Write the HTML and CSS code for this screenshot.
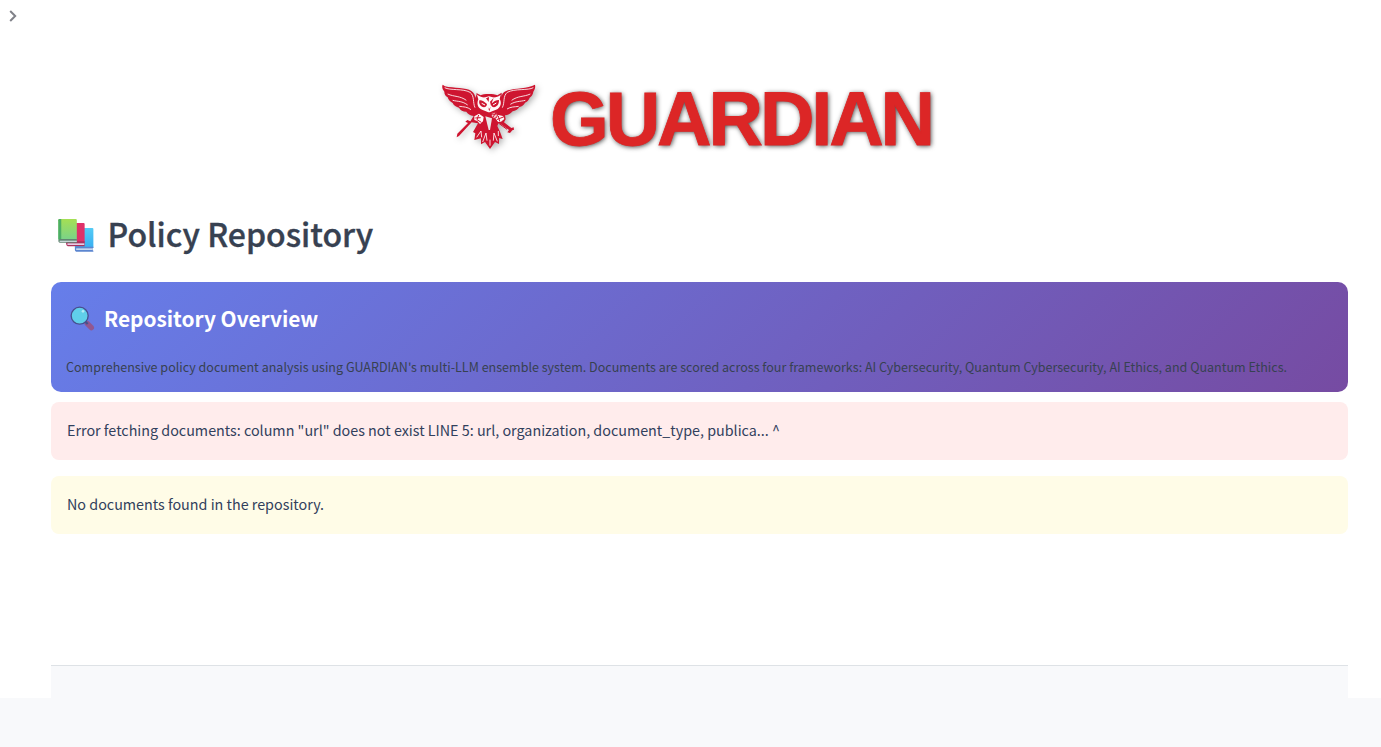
FILE: index.html
```html
<!DOCTYPE html>
<html lang="en">
<head>
<meta charset="utf-8">
<title>Policy Repository</title>
<link rel="stylesheet" href="styles.css">
</head>
<body>
<div class="app">
  <button class="expand" aria-label="Open sidebar">
    <svg width="8" height="12" viewBox="0 0 8 12"><path d="M1.2 1 6.2 6 1.2 11" fill="none" stroke="#808289" stroke-width="2"/></svg>
  </button>
  <main class="content">
    <header class="brand">
      <svg class="owl" width="110" height="85" viewBox="0 0 330 255">
        <path class="red" d="M23 29 L30 34 C56 40 94 38 109 48 C117 53 121 62 121 69 L125 57 L124 54 L137 61 C145 56 177 56 187 61 L200 53 L200 66 C201 54 209 49 219 46 C240 39 278 41 300 29 C302 38 299 45 295 50 C294 59 289 64 284 68 C281 76 276 80 270 83 C267 90 261 94 253 96 C248 104 241 107 233 109 C226 117 218 121 210 121 L212 133 L207 142 L229 159 L236 157 L237 164 L232 166 L225 174 L217 172 L222 165 L191 143 L187 153 L195 170 L203 192 L192 189 L192 207 L180 201 L165 222 L150 201 L138 208 L138 190 L118 195 L121 175 L114 171 L129 145 L110 142 L72 183 L65 187 L67 176 L99 144 L91 140 L97 135 L106 139 L116 123 C105 121 98 116 94 110 C84 110 76 106 72 98 C64 97 56 91 53 84 C45 80 40 74 38 67 C31 63 28 57 28 50 C22 43 20 36 23 29Z"/>
        <g class="line">
          <path d="M29 38 C45 47 84 40 105 52 C119 62 113 83 120 98"/>
          <path d="M295 38 C280 47 239 40 217 52 C203 63 210 83 202 98"/>
          <path d="M38 57 C58 66 75 62 94 76 M53 76 C69 80 82 78 98 90 M73 94 C87 96 96 95 108 104"/>
          <path d="M286 57 C266 66 249 62 230 76 M271 76 C255 80 242 78 226 88 M251 94 C237 96 228 95 216 102"/>
          <path d="M125 187 L138 168 L140 187 M143 201 L153 174 L156 197 M165 212 L165 194 M175 197 L177 174 L187 199 M190 183 L190 168"/>
        </g>
        <path class="white" d="M126 59 C137 66 143 68 151 67 L162 64 L173 67 C181 68 190 65 197 59 L194 72 C201 83 197 95 188 102 C179 106 171 108 165 112 L160 112 C153 108 145 106 137 102 C126 95 126 83 130 73Z"/>
        <path class="red" d="M133 76 C141 75 147 79 156 87 C155 97 147 98 141 95 C134 92 131 84 133 76Z M192 75 C183 75 175 80 168 87 C169 97 177 99 184 94 C190 90 192 83 192 75Z M153 70 L161 81 L162 66Z M176 69 L165 80 L168 92 L172 79Z M158 95 L162 103 L167 95L163 109Z"/>
        <path class="mark" d="M140 85 L150 90 M184 84 L174 90"/>
        <path class="white" d="M118 124 L132 116 L146 126 L144 139 L135 147 L127 138 L118 135Z M180 128 L190 120 L204 123 L208 132 L198 140 L188 141Z"/>
        <g class="detail"><path d="M121 129 L137 128 M131 120 L126 134 L139 142 M185 134 L205 126 M190 123 L194 139"/></g>
        <path class="gap" d="M151 124 L171 130 L165 165 L161 165Z"/>
        <circle class="rose" cx="178" cy="121" r="9"/>
        <path class="detail" d="M172 118 L184 117 M174 126 L183 113 M181 133 L190 144 L216 163"/>
      </svg>
      <span class="wordmark">GUARDIAN</span>
    </header>
    <h1 class="title">
      <svg class="books" width="37" height="36" viewBox="0 0 114 108" preserveAspectRatio="none">
        <defs>
          <linearGradient id="g" x2="0" y2="1"><stop stop-color="#a5df54"/><stop offset="1" stop-color="#79d38a"/></linearGradient>
          <linearGradient id="b" x2="0" y2="1"><stop stop-color="#55cbf5"/><stop offset="1" stop-color="#38aef1"/></linearGradient>
        </defs>
        <path fill="url(#b)" d="M55 30h51q3 0 3 3v57H52V33z"/><path fill="#5c86d0" d="M52 91q-1-4 4-5h53v3l-2 1v7l2 1v3H56q-4-2-4-5z"/><path fill="#c8d8ef" d="M56 91h51v5H56z"/>
        <path fill="#df3068" d="M30 15h49q3 0 3 3v56H26z"/><path fill="#ac315e" d="M25 76q0-5 5-6h52v15H30q-5-2-5-9z"/><path fill="#e6cee4" d="M29 76h52v5H29z"/>
        <path fill="url(#g)" d="M5 3h50q3 0 3 3v60H1V7q0-4 4-4z"/><path fill="#4bad65" d="M4 3h6v61H1V7q0-4 3-4z"/><path fill="#628573" d="M1 68q0-4 5-5h52v11H5q-4-1-4-6z"/><path fill="#c7d6d8" d="M5 68h53v4H5z"/>
      </svg>
      <span class="title-text">Policy Repository</span>
    </h1>
    <section class="overview">
      <h3 class="overview-title">
        <svg width="25" height="25" viewBox="0 0 75 75"><path d="M52 53 64 65" stroke="#92578f" stroke-width="16" stroke-linecap="round"/><path d="M44 45l9 9" stroke="#46518b" stroke-width="7"/><circle cx="29" cy="29" r="25.5" fill="#60cfea" stroke="#474f8e" stroke-width="4"/><circle cx="39" cy="16" r="4" fill="#b5ecf7"/></svg>
        <span>Repository Overview</span>
      </h3>
      <p class="overview-text">Comprehensive policy document analysis using GUARDIAN's multi-LLM ensemble system. Documents are scored across four frameworks: AI Cybersecurity, Quantum Cybersecurity, AI Ethics, and Quantum Ethics.</p>
    </section>
    <div class="alert alert-error"><span>Error fetching documents: column "url" does not exist LINE 5: url, organization, document_type, publica... ^</span></div>
    <div class="alert alert-warning"><span>No documents found in the repository.</span></div>
    <footer class="footer"></footer>
  </main>
</div>
</body>
</html>
```
FILE: styles.css
```css
* { box-sizing: border-box; }
body {
  margin: 0;
  height: 747px;
  overflow: hidden;
  background: #f8f9fb;
  color: #31333f;
  font-family: "Noto Sans CJK SC", "Noto Sans", sans-serif;
}
.app { height: 698px; background: #fff; }
.expand {
  position: absolute;
  top: 10px;
  left: 9px;
  padding: 0;
  border: 0;
  background: none;
  line-height: 0;
}
.content {
  display: flex;
  flex-direction: column;
  padding: 75px 33px 0 51px;
}
.brand { display: flex; height: 85px; padding-left: 384px; }
.owl { flex: none; filter: drop-shadow(2px 2px 3px rgba(0, 0, 0, .3)); }
.red { fill: #ce1530; }
.white { fill: #fff8f8; }
.gap { fill: #e9e5e6; }
.line { fill: none; stroke: #fff; stroke-width: 2.5; }
.mark { fill: none; stroke: #fff; stroke-width: 3; }
.detail { fill: none; stroke: #ce1530; stroke-width: 3; }
.rose { fill: #f7c8ce; stroke: #ce1530; stroke-width: 3; }
.wordmark {
  margin-left: 5px;
  font: bold 75.5px/88px "Liberation Sans", Arial, sans-serif;
  letter-spacing: -3.1px;
  color: #dc2626;
  -webkit-text-stroke: 0.8px #dc2626;
  text-shadow: 1px 1px 5px rgba(0, 0, 0, .75);
}
.title {
  display: flex;
  align-items: center;
  gap: 12.5px;
  height: 44px;
  margin: 54px 0 0 7px;
  color: #374151;
  font-size: 32px;
  font-weight: 500;
  line-height: 39px;
  white-space: nowrap;
}
.title-text { height: 44px; -webkit-text-stroke: 0.35px #374151; }
.overview {
  height: 110px;
  margin-top: 24px;
  padding: 21px 15px 0;
  border-radius: 10px;
  background: linear-gradient(135deg, #667eea 0%, #764ba2 100%);
}
.overview-title {
  display: flex;
  align-items: center;
  gap: 9px;
  height: 30px;
  margin: 0 0 0 4px;
  color: #fff;
  font-size: 20.85px;
  font-weight: 700;
  line-height: 30px;
}
.overview-text {
  margin: 23px 0 0;
  color: #374151;
  font-size: 12.545px;
  line-height: 22px;
  white-space: nowrap;
}
.alert {
  height: 58px;
  padding: 15px 16px;
  border-radius: 8px;
  color: #31405c;
  font-size: 14.33px;
  line-height: 26px;
}
.alert-error { margin-top: 10px; background: #ffecec; }
.alert-warning { margin-top: 16px; background: #fffce7; }
.footer {
  height: 82px;
  margin-top: 131px;
  border-top: 1px solid #dee2e6;
  background: #f8f9fb;
}
```
